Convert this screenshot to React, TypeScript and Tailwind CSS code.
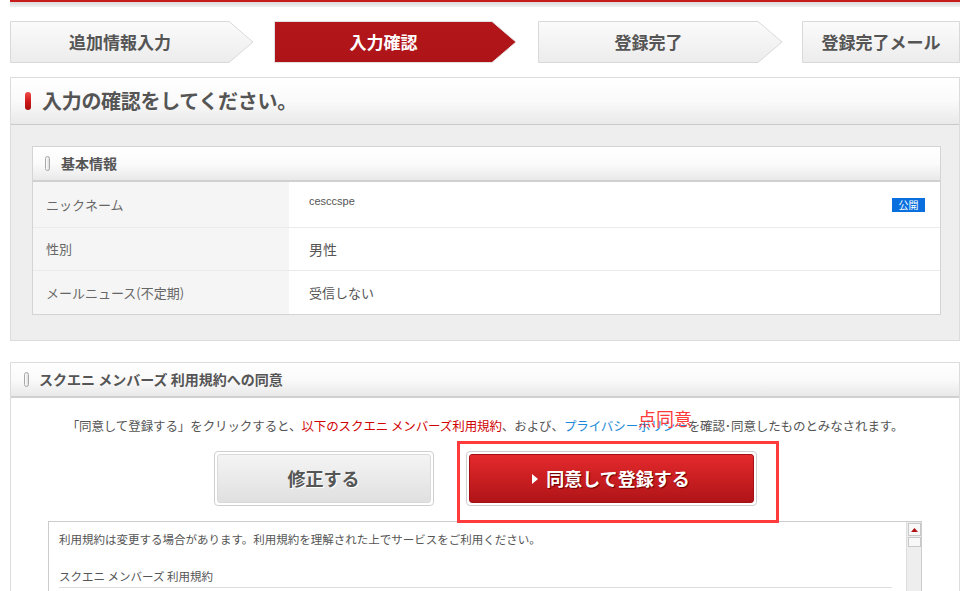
import React from "react";

function StepShape({ w, active, id, arrow }: { w: number; active: boolean; id: string; arrow: boolean }) {
  const h = 42;
  const pts = arrow
    ? `0.5,0.5 ${w - 25},0.5 ${w - 1},21 ${w - 25},41.5 0.5,41.5`
    : `0.5,0.5 ${w - 0.5},0.5 ${w - 0.5},41.5 0.5,41.5`;
  return (
    <svg className="absolute inset-0" width={w} height={h} viewBox={`0 0 ${w} ${h}`}>
      <defs>
        <linearGradient id={id} x1="0" y1="0" x2="0" y2="1">
          {active ? (
            <>
              <stop offset="0" stopColor="#b3161b" />
              <stop offset="1" stopColor="#ad1418" />
            </>
          ) : (
            <>
              <stop offset="0" stopColor="#fbfbfb" />
              <stop offset="1" stopColor="#ececec" />
            </>
          )}
        </linearGradient>
      </defs>
      <polygon points={pts} fill={`url(#${id})`} stroke={active ? "#e2e2e2" : "#d9d9d9"} strokeWidth="1" />
    </svg>
  );
}

function RedPill() {
  return <span className="block w-[6px] h-[18px] rounded-full bg-gradient-to-b from-[#f04848] via-[#d01a1a] to-[#a80e0e]" />;
}

function GrayPill() {
  return <span className="block w-[5px] h-[15px] rounded-full border border-[#a8a8a8] bg-gradient-to-r from-[#ffffff] to-[#dcdcdc]" />;
}

export default function App() {
  return (
    <div className="w-[973px] h-[591px] overflow-hidden bg-white [font-family:'Noto_Sans_CJK_JP','Noto_Sans',sans-serif] text-[#555]">
      <div className="ml-[10px] w-[950px]">
        {/* top bar */}
        <div className="h-[2px] bg-[#c81d1d]" />
        <div className="h-[5px] bg-gradient-to-b from-[#dadada] to-[#f2f2f2]" />

        {/* steps */}
        <div className="mt-[14px] flex">
          <div className="relative w-[244px] h-[42px] flex items-center justify-center pr-[24px]">
            <StepShape w={244} active={false} id="g1" arrow />
            <span className="relative text-[17px] font-bold text-[#555]">追加情報入力</span>
          </div>
          <div className="relative ml-[20px] w-[243px] h-[42px] flex items-center justify-center pr-[24px]">
            <StepShape w={243} active id="g2" arrow />
            <span className="relative text-[17px] font-bold text-white">入力確認</span>
          </div>
          <div className="relative ml-[21px] w-[245px] h-[42px] flex items-center justify-center pr-[24px]">
            <StepShape w={245} active={false} id="g3" arrow />
            <span className="relative text-[17px] font-bold text-[#555]">登録完了</span>
          </div>
          <div className="relative ml-[19px] w-[158px] h-[42px] flex items-center justify-center">
            <StepShape w={158} active={false} id="g4" arrow={false} />
            <span className="relative text-[17px] font-bold text-[#555]">登録完了メール</span>
          </div>
        </div>

        {/* section 1 */}
        <div className="mt-[14px] border border-[#dcdcdc] bg-[#eeeeee]">
          <div className="h-[47px] flex items-center pl-[14px] gap-[11px] bg-gradient-to-b from-[#ffffff] via-[#fafafa] to-[#e9e9e9] border-b border-[#c9c9c9]">
            <RedPill />
            <span className="text-[20px] font-bold text-[#555] tracking-[-0.3px]">入力の確認をしてください。</span>
          </div>
          <div className="pt-[21px] pl-[21px] pr-[18px] pb-[25px]">
            <div className="border border-[#d4d4d4] bg-white">
              <div className="h-[35px] flex items-center pl-[12px] gap-[11px] bg-gradient-to-b from-[#ffffff] via-[#fbfbfb] to-[#e9e9e9] border-b-2 border-[#d0d0d0]">
                <GrayPill />
                <span className="text-[14px] font-bold text-[#555]">基本情報</span>
              </div>
              <div className="flex h-[46px] border-b border-[#ebebeb]">
                <div className="w-[256px] bg-[#f5f5f5] flex items-center pl-[13px] text-[13px] text-[#666]">ニックネーム</div>
                <div className="flex-1 flex justify-between pl-[20px] pr-[15px]">
                  <span className="mt-[11px] text-[11px] text-[#555] [font-family:'Liberation_Sans',sans-serif]">cesccspe</span>
                  <span className="mt-[16px] h-[14px] w-[33px] bg-[#0a6fde] text-white text-[10px] leading-[14px] text-center">公開</span>
                </div>
              </div>
              <div className="flex h-[43px] border-b border-[#ebebeb]">
                <div className="w-[256px] bg-[#f5f5f5] flex items-center pl-[13px] text-[13px] text-[#666]">性別</div>
                <div className="flex-1 flex items-center pl-[20px] text-[14px] text-[#555]">男性</div>
              </div>
              <div className="flex h-[43px]">
                <div className="w-[256px] bg-[#f5f5f5] flex items-center pl-[13px] text-[13px] text-[#666]">メールニュース(不定期)</div>
                <div className="flex-1 flex items-center pl-[20px] text-[13px] text-[#555]">受信しない</div>
              </div>
            </div>
          </div>
        </div>

        {/* section 2 */}
        <div className="mt-[21px] border border-[#dcdcdc] bg-white h-[300px]">
          <div className="h-[35px] flex items-center pl-[13px] gap-[10px] bg-gradient-to-b from-[#ffffff] via-[#fafafa] to-[#e9e9e9] border-b-2 border-[#d0d0d0]">
            <GrayPill />
            <span className="text-[14px] font-bold text-[#555]">スクエニ メンバーズ 利用規約への同意</span>
          </div>
          <div className="relative">
            <p className="pt-[18px] text-center text-[12.5px] leading-[20px] text-[#555] tracking-[-0.1px]">
              「同意して登録する」をクリックすると、<span className="text-[#d00000]">以下のスクエニ メンバーズ利用規約</span>、および、<span className="text-[#1b8ad8]">プライバシーポリシー</span>を確認･同意したものとみなされます。
            </p>
            <span className="absolute left-[627px] top-[9px] text-[18px] leading-[22px] text-[#ff3a3a]">点同意</span>

            <div className="mt-[15px] flex justify-center gap-[32px]">
              <div className="w-[220px] h-[55px] rounded-[4px] border border-[#cfcfcf] bg-white p-[2px]">
                <div className="h-full rounded-[3px] border border-[#dadada] bg-gradient-to-b from-[#f4f4f4] to-[#e0e0e0] flex items-center justify-center">
                  <span className="text-[18px] font-bold text-[#555] [text-shadow:1px_1px_0_#fff]">修正する</span>
                </div>
              </div>
              <div className="w-[291px] h-[55px] rounded-[4px] border border-[#cfcfcf] bg-white p-[2px]">
                <div className="h-full rounded-[3px] border border-[#a51015] bg-gradient-to-b from-[#e4292c] to-[#b01418] flex items-center justify-center gap-[8px]">
                  <svg width="6" height="10" viewBox="0 0 6 10"><polygon points="0,0 6,5 0,10" fill="#fff" /></svg>
                  <span className="text-[18px] font-bold text-white [text-shadow:1px_1px_1px_#6a0000]">同意して登録する</span>
                </div>
              </div>
            </div>
            <div className="absolute left-[446px] top-[43px] w-[322px] h-[82px] border-[3px] border-[#ff3b3b]" />

            <div className="mt-[15px] mx-auto w-[874px] h-[80px] border border-[#cccccc] flex">
              <div className="flex-1 pl-[10px] pr-[14px] pt-[9px]">
                <p className="text-[11.5px] leading-[16px] text-[#555]">利用規約は変更する場合があります。利用規約を理解された上でサービスをご利用ください。</p>
                <p className="mt-[21px] text-[11.5px] leading-[16px] text-[#555] pb-[3px] border-b border-[#dddddd]">スクエニ メンバーズ 利用規約</p>
              </div>
              <div className="w-[15px] bg-[#eeeeee] border-l border-[#dddddd] pt-[1px] flex flex-col items-center gap-[1px]">
                <div className="w-[13px] h-[13px] border border-[#c8c8c8] bg-[#f8f8f8] flex items-center justify-center">
                  <svg width="7" height="4" viewBox="0 0 7 4"><polygon points="3.5,0 7,4 0,4" fill="#b01010" /></svg>
                </div>
                <div className="w-[13px] h-[10px] border border-[#c8c8c8] bg-[#f8f8f8]" />
              </div>
            </div>
          </div>
        </div>
      </div>
    </div>
  );
}
